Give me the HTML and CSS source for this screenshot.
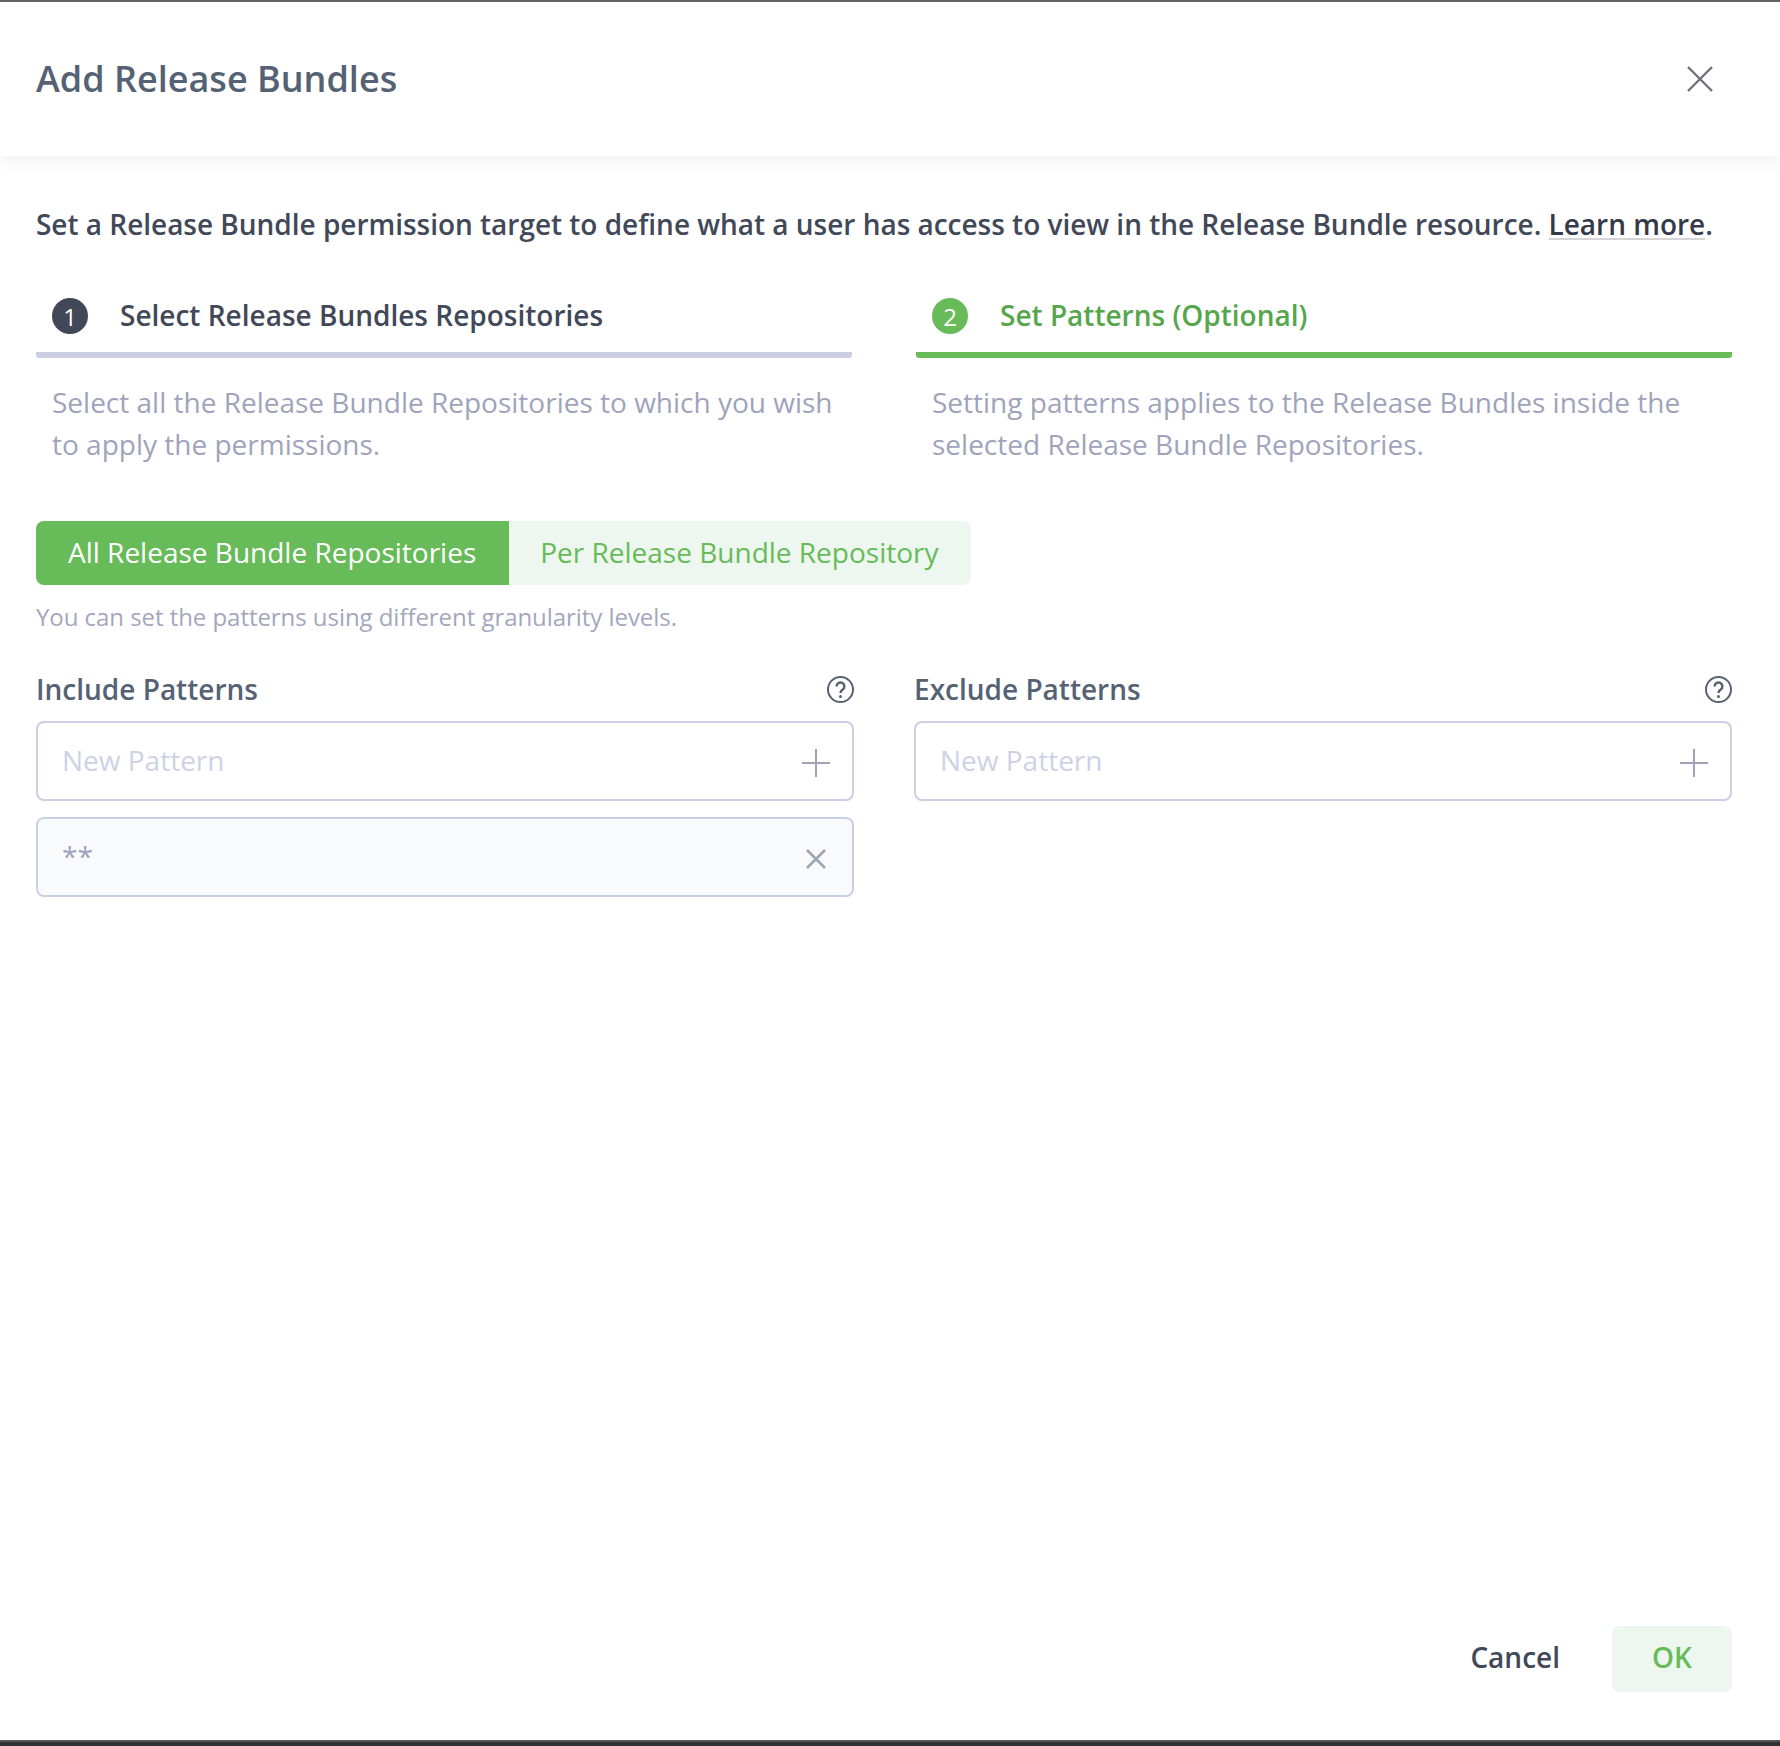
FILE: index.html
```html
<!DOCTYPE html>
<html lang="en">
<head>
<meta charset="utf-8">
<title>Add Release Bundles</title>
<link rel="stylesheet" href="styles.css">
</head>
<body>
<div class="modal">
  <header class="modal-header">
    <h1 class="modal-title">Add Release Bundles</h1>
    <svg class="close-icon" width="28" height="28" viewBox="0 0 28 28"><path d="M2 2L26 26M26 2L2 26"/></svg>
  </header>
  <main class="modal-body">
    <p class="intro">Set a Release Bundle permission target to define what a user has access to view in the Release Bundle resource. <a class="learn">Learn more</a>.</p>
    <div class="steps">
      <section class="step">
        <div class="step-head">
          <span class="step-num">1</span>
          <span class="step-title">Select Release Bundles Repositories</span>
        </div>
        <p class="step-desc">Select all the Release Bundle Repositories to which you wish to apply the permissions.</p>
      </section>
      <section class="step step-active">
        <div class="step-head">
          <span class="step-num">2</span>
          <span class="step-title">Set Patterns (Optional)</span>
        </div>
        <p class="step-desc">Setting patterns applies to the Release Bundles inside the selected Release Bundle Repositories.</p>
      </section>
    </div>
    <div class="toggle">
      <span class="toggle-item toggle-on">All Release Bundle Repositories</span>
      <span class="toggle-item toggle-off">Per Release Bundle Repository</span>
    </div>
    <p class="hint">You can set the patterns using different granularity levels.</p>
    <div class="patterns">
      <section class="pattern-col">
        <div class="pattern-label">
          <span>Include Patterns</span>
          <svg class="help-icon" width="27" height="27" viewBox="0 0 27 27"><circle cx="13.5" cy="13.5" r="12.5"/><path d="M9.6 10.4a3.9 3.9 0 1 1 6.1 3.2c-1.4.9-2.2 1.6-2.2 3.4"/><circle class="dot" cx="13.5" cy="20.4" r="1.5"/></svg>
        </div>
        <div class="field">
          <span class="placeholder">New Pattern</span>
          <svg class="field-icon icon-plus" width="28" height="28" viewBox="0 0 28 28"><path d="M14 0V28M0 14H28"/></svg>
        </div>
        <div class="field field-filled">
          <span class="value">**</span>
          <svg class="field-icon icon-remove" width="20" height="20" viewBox="0 0 20 20"><path d="M1 1L19 19M19 1L1 19"/></svg>
        </div>
      </section>
      <section class="pattern-col">
        <div class="pattern-label">
          <span>Exclude Patterns</span>
          <svg class="help-icon" width="27" height="27" viewBox="0 0 27 27"><circle cx="13.5" cy="13.5" r="12.5"/><path d="M9.6 10.4a3.9 3.9 0 1 1 6.1 3.2c-1.4.9-2.2 1.6-2.2 3.4"/><circle class="dot" cx="13.5" cy="20.4" r="1.5"/></svg>
        </div>
        <div class="field">
          <span class="placeholder">New Pattern</span>
          <svg class="field-icon icon-plus" width="28" height="28" viewBox="0 0 28 28"><path d="M14 0V28M0 14H28"/></svg>
        </div>
      </section>
    </div>
  </main>
  <footer class="modal-footer">
    <span class="btn-cancel">Cancel</span>
    <span class="btn-ok">OK</span>
  </footer>
</div>
</body>
</html>
```

FILE: styles.css
```css
* { box-sizing: border-box; }
html, body { margin: 0; padding: 0; }
body { font-family: "Open Sans", sans-serif; background: #fff; }
.modal {
  height: 1746px;
  display: flex;
  flex-direction: column;
  border-top: 2px solid #636366;
  border-bottom: 4px solid #303134;
  overflow: hidden;
}
.modal-header {
  height: 154px;
  flex: none;
  padding: 0 66px 0 36px;
  display: flex;
  align-items: center;
  justify-content: space-between;
  background: #fff;
  box-shadow: 0 4px 16px rgba(40, 40, 60, 0.07);
}
.modal-title { margin: 0 0 2px; font-size: 36px; font-weight: 600; color: #556274; }
.close-icon path { fill: none; stroke: #6d7178; stroke-width: 2.4; }
.modal-body { flex: 1; padding: 0 48px 0 36px; }
.intro { margin: 46px 0 0; font-size: 28px; font-weight: 600; line-height: 44px; letter-spacing: -0.02px; color: #414858; }
.learn { color: #343a48; text-decoration: underline #d5d5d8 2px; text-underline-offset: 3px; }
.steps { display: flex; justify-content: space-between; margin-top: 46px; }
.step { width: 816px; }
.step-head {
  height: 66px;
  padding: 0 16px 12px;
  display: flex;
  align-items: center;
  gap: 32px;
  border-bottom: 6px solid #cacfe3;
  border-radius: 0 0 3px 3px;
  font-size: 28px;
  font-weight: 600;
  color: #414858;
}
.step-title { margin-bottom: 2px; }
.step-num {
  width: 36px; height: 36px; border-radius: 50%; flex: none;
  display: flex; align-items: center; justify-content: center;
  background: #414858; color: #fff; font-size: 24px; font-weight: 500;
}
.step-desc { margin: 23px 0 0; padding: 0 16px; font-size: 28px; line-height: 42px; color: #9fa3bb; }
.step-active .step-head { border-bottom-color: #67bb58; color: #56a64b; }
.step-active .step-num { background: #67bb58; }
.toggle { display: inline-flex; margin-top: 56px; height: 64px; font-size: 28px; vertical-align: top; }
.toggle-item {
  display: flex; align-items: center; padding: 0 32px 2px;
}
.toggle-off { padding-left: 31px; background: #edf7ef; color: #67bb58; border-radius: 0 8px 8px 0; }
.toggle-on { padding-right: 33px; background: #67bb58; color: #fff; border-radius: 8px 0 0 8px; }
.hint { margin: 14px 0 0; font-size: 24px; line-height: 36px; letter-spacing: -0.05px; color: #a3a7bd; }
.patterns { display: flex; gap: 60px; margin-top: 31px; }
.pattern-col { width: 818px; display: flex; flex-direction: column; }
.pattern-label {
  height: 55px; padding-bottom: 9px; display: flex; align-items: center; justify-content: space-between;
  font-size: 28px; font-weight: 600; color: #556274;
}
.help-icon circle { fill: none; stroke: #566273; stroke-width: 2; }
.help-icon path { fill: none; stroke: #566273; stroke-width: 2.4; }
.help-icon .dot { fill: #566273; stroke: none; }
.field {
  height: 80px; margin-top: 0; padding: 0 22px 0 24px;
  display: flex; align-items: center; justify-content: space-between;
  border: 2px solid #cacfe3; border-radius: 8px; background: #fff; font-size: 28px;
}
.field + .field { margin-top: 16px; }
.field-filled { background: #f8fafc; padding-right: 26px; }
.placeholder { color: #cdd2e6; margin-bottom: 2px; }
.value { color: #9fa3bb; margin-top: -2px; }
.icon-plus { margin-top: 4px; }
.icon-remove { margin-top: 4px; }
.field-icon path { fill: none; stroke: #a0a3b8; stroke-width: 2; }
.icon-remove path { stroke-width: 2.5; }
.modal-footer {
  flex: none; height: 116px; padding: 0 48px 48px 0;
  display: flex; align-items: center; justify-content: flex-end; gap: 52px;
  border-bottom: 2px solid #535458;
  font-size: 28px; font-weight: 600;
}
.btn-cancel { color: #414858; margin-bottom: 4px; }
.btn-ok {
  width: 120px; height: 66px; padding-bottom: 5px; display: flex; align-items: center; justify-content: center;
  background: #edf7ef; color: #67bb58; border-radius: 8px;
}
```
